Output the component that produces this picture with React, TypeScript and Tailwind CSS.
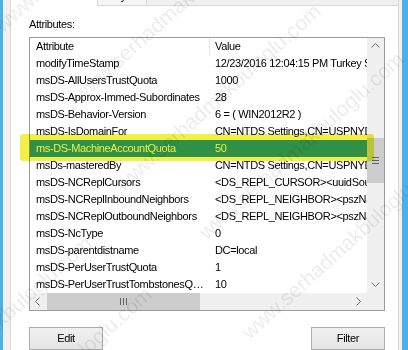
import React from "react";

const rows: [string, string][] = [
  ["modifyTimeStamp", "12/23/2016 12:04:15 PM Turkey Standard Time"],
  ["msDS-AllUsersTrustQuota", "1000"],
  ["msDS-Approx-Immed-Subordinates", "28"],
  ["msDS-Behavior-Version", "6 = ( WIN2012R2 )"],
  ["msDS-IsDomainFor", "CN=NTDS Settings,CN=USPNYDC01,CN=Servers"],
  ["ms-DS-MachineAccountQuota", "50"],
  ["msDs-masteredBy", "CN=NTDS Settings,CN=USPNYDC01,CN=Servers"],
  ["msDS-NCReplCursors", "<DS_REPL_CURSOR><uuidSourceDsaInvocationID>"],
  ["msDS-NCReplInboundNeighbors", "<DS_REPL_NEIGHBOR><pszNamingContext>"],
  ["msDS-NCReplOutboundNeighbors", "<DS_REPL_NEIGHBOR><pszNamingContext>"],
  ["msDS-NcType", "0"],
  ["msDS-parentdistname", "DC=local"],
  ["msDS-PerUserTrustQuota", "1"],
  ["msDS-PerUserTrustTombstonesQuotaEnforced", "10"],
];

const SELECTED = 5;

const Chevron = ({ dir }: { dir: "up" | "down" | "left" | "right" }) => {
  const pts = {
    up: "0.5,5.5 4.5,1.5 8.5,5.5",
    down: "0.5,2.5 4.5,6.5 8.5,2.5",
    left: "5.5,0.5 1.5,4.5 5.5,8.5",
    right: "2.5,0.5 6.5,4.5 2.5,8.5",
  }[dir];
  return (
    <svg width="9" height="9" viewBox="0 0 9 9">
      <polyline points={pts} fill="none" stroke="#707070" strokeWidth="1" />
    </svg>
  );
};

const ScrollButton = ({ dir }: { dir: "up" | "down" | "left" | "right" }) => (
  <div className="w-[17px] h-[17px] shrink-0 flex items-center justify-center bg-[#f0f0f0]">
    <Chevron dir={dir} />
  </div>
);

const VScroll = () => (
  <div className="w-[17px] h-[255px] flex flex-col bg-[#f0f0f0]">
    <ScrollButton dir="up" />
    <div className="flex-1 flex flex-col">
      <div className="mt-[83px] h-[45px] bg-[#cdcdcd] flex flex-col items-center justify-center gap-[2px]">
        <div className="w-[7px] h-px bg-[#606060]" />
        <div className="w-[7px] h-px bg-[#606060]" />
        <div className="w-[7px] h-px bg-[#606060]" />
      </div>
    </div>
    <ScrollButton dir="down" />
  </div>
);

const HScroll = () => (
  <div className="w-[337px] h-[17px] flex bg-[#f0f0f0]">
    <ScrollButton dir="left" />
    <div className="w-[153px] h-full bg-[#cdcdcd] flex items-center justify-center gap-[2px]">
      <div className="w-px h-[7px] bg-[#606060]" />
      <div className="w-px h-[7px] bg-[#606060]" />
      <div className="w-px h-[7px] bg-[#606060]" />
    </div>
    <div className="flex-1" />
    <ScrollButton dir="right" />
  </div>
);

const AttributeList = () => (
  <div className="w-[356px] h-[274px] border border-[#9a9a9a] bg-white flex flex-col">
    <div className="flex h-[255px]">
      <div className="w-[337px] overflow-hidden flex flex-col">
        <div className="flex h-[17px] leading-[17px] shrink-0">
          <div className="w-[180px] shrink-0 pl-[6px] border-r border-[#e5e5e5]">Attribute</div>
          <div className="pl-[5px] whitespace-nowrap">Value</div>
        </div>
        {rows.map(([attr, value], i) => (
          <div
            key={attr}
            className={
              i === SELECTED
                ? "flex h-[17px] leading-[17px] shrink-0 bg-[#3399ff] text-white"
                : "flex h-[17px] leading-[17px] shrink-0"
            }
          >
            <div className="w-[180px] shrink-0 pl-[6px] pr-[4px] truncate">{attr}</div>
            <div className="pl-[5px] whitespace-nowrap">{value}</div>
          </div>
        ))}
      </div>
      <VScroll />
    </div>
    <div className="flex h-[17px]">
      <HScroll />
      <div className="w-[17px] h-[17px] bg-[#f0f0f0]" />
    </div>
  </div>
);

const WinButton = ({ label }: { label: string }) => (
  <button className="w-[74px] h-[23px] border border-[#acacac] bg-linear-to-b from-[#f0f0f0] to-[#e5e5e5] text-black leading-[21px]">
    {label}
  </button>
);

const Watermark = ({ className }: { className: string }) => (
  <span
    className={
      "absolute origin-left -rotate-[42deg] whitespace-nowrap text-[21px] leading-[20px] tracking-normal text-black/[0.08] " +
      className
    }
  >
    www.serhadmakbuloglu.com
  </span>
);

export default function App() {
  return (
    <div
      className="relative w-[408px] h-[350px] overflow-hidden bg-[#f0f0f0] flex text-[11px] tracking-[-0.35px] text-black"
      style={{ fontFamily: '"Liberation Sans", Arial, sans-serif' }}
    >
      <div className="w-[3px] shrink-0 bg-[#4cb2e4]" />
      <div className="w-[7px] shrink-0" />

      <div className="w-[389px] shrink-0 flex flex-col">
        {/* tab strip */}
        <div className="flex h-[6px] shrink-0">
          <div className="w-[88px] shrink-0 bg-white border-l border-r border-[#d9d9d9]" />
          <div className="relative w-[49px] shrink-0 overflow-hidden bg-[#f5f5f5] border-r border-b border-[#d9d9d9]">
            <span className="absolute left-[-9px] top-[-10px] leading-[13px] whitespace-nowrap">Security</span>
          </div>
          <div className="flex-1 border-b border-r border-[#d9d9d9]" />
        </div>

        {/* tab page */}
        <div className="flex-1 flex flex-col bg-white border-x border-b border-[#d9d9d9] pl-[18px] pt-[12px]">
          <div className="h-[13px] leading-[13px]">Attributes:</div>
          <div className="mt-[6px]">
            <AttributeList />
          </div>
          <div className="mt-[16px] w-[356px] flex justify-between">
            <WinButton label="Edit" />
            <WinButton label="Filter" />
          </div>
        </div>
      </div>

      <div className="w-[3px] shrink-0" />
      <div className="w-[6px] shrink-0 bg-[#4cb2e4]" />

      {/* highlighter marker */}
      <div className="absolute left-[20px] top-[134px] w-[354px] h-[27px] rounded-[3px] bg-[#f0f046] mix-blend-multiply pointer-events-none" />

      {/* watermark */}
      <div className="absolute inset-0 pointer-events-none">
        <Watermark className="left-[-2px] top-[18px]" />
        <Watermark className="left-[76px] top-[88px]" />
        <Watermark className="left-[119px] top-[177px]" />
        <Watermark className="left-[202px] top-[225px]" />
        <Watermark className="left-[245px] top-[325px]" />
        <Watermark className="left-[-110px] top-[409px]" />
        <Watermark className="left-[-50px] top-[460px]" />
      </div>
    </div>
  );
}
